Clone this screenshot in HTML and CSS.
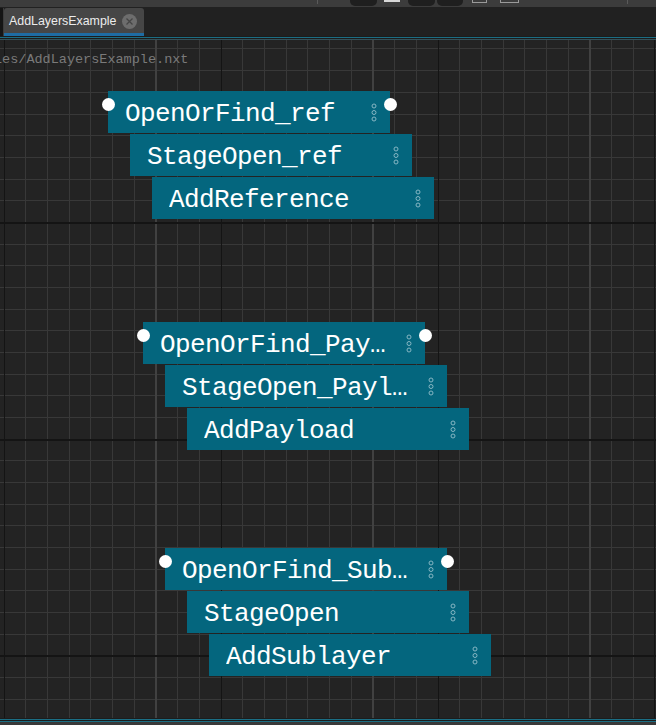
FILE: index.html
```html
<!DOCTYPE html>
<html>
<head>
<meta charset="utf-8">
<link rel="stylesheet" href="styles.css">
</head>
<body>
<div class="app">
  <div class="topstrip">
    <span class="tick t1"></span>
    <span class="tb tb1"></span>
    <span class="wbar"></span>
    <span class="tb tb2"></span>
    <span class="tb tb3"></span>
    <span class="brk b1"></span>
    <span class="brk b2"></span>
    <span class="tick t2"></span>
  </div>
  <div class="tabbar">
    <span class="tabedge"></span>
    <div class="tab">
      <span class="tabtitle">AddLayersExample</span>
      <svg class="tabclose" width="15" height="15" viewBox="0 0 15 15"><circle cx="7.5" cy="7.5" r="7.5" fill="#6d6d6d"/><path d="M4.5 4.5L10.5 10.5M10.5 4.5L4.5 10.5" stroke="#454545" stroke-width="1.3"/></svg>
    </div>
  </div>
  <div class="rule r-dark"></div>
  <div class="rule r-teal"></div>
  <div class="rule r-dark"></div>
  <div class="rule r-gray"></div>
  <div class="canvas">
    <svg class="grid" width="656" height="678" viewBox="0 40 656 678" shape-rendering="crispEdges">
      <g class="minor">
        <rect x="25" y="40" width="1" height="678"/><rect x="47" y="40" width="1" height="678"/><rect x="69" y="40" width="1" height="678"/><rect x="90" y="40" width="1" height="678"/><rect x="112" y="40" width="1" height="678"/><rect x="134" y="40" width="1" height="678"/><rect x="177" y="40" width="1" height="678"/><rect x="199" y="40" width="1" height="678"/><rect x="242" y="40" width="1" height="678"/><rect x="264" y="40" width="1" height="678"/><rect x="286" y="40" width="1" height="678"/><rect x="307" y="40" width="1" height="678"/><rect x="329" y="40" width="1" height="678"/><rect x="351" y="40" width="1" height="678"/><rect x="394" y="40" width="1" height="678"/><rect x="416" y="40" width="1" height="678"/><rect x="459" y="40" width="1" height="678"/><rect x="481" y="40" width="1" height="678"/><rect x="503" y="40" width="1" height="678"/><rect x="524" y="40" width="1" height="678"/><rect x="546" y="40" width="1" height="678"/><rect x="568" y="40" width="1" height="678"/><rect x="611" y="40" width="1" height="678"/><rect x="633" y="40" width="1" height="678"/>
        <rect x="0" y="48" width="656" height="1"/><rect x="0" y="70" width="656" height="1"/><rect x="0" y="92" width="656" height="1"/><rect x="0" y="114" width="656" height="1"/><rect x="0" y="135" width="656" height="1"/><rect x="0" y="157" width="656" height="1"/><rect x="0" y="179" width="656" height="1"/><rect x="0" y="200" width="656" height="1"/><rect x="0" y="244" width="656" height="1"/><rect x="0" y="265" width="656" height="1"/><rect x="0" y="287" width="656" height="1"/><rect x="0" y="309" width="656" height="1"/><rect x="0" y="330" width="656" height="1"/><rect x="0" y="352" width="656" height="1"/><rect x="0" y="374" width="656" height="1"/><rect x="0" y="395" width="656" height="1"/><rect x="0" y="417" width="656" height="1"/><rect x="0" y="460" width="656" height="1"/><rect x="0" y="482" width="656" height="1"/><rect x="0" y="504" width="656" height="1"/><rect x="0" y="525" width="656" height="1"/><rect x="0" y="547" width="656" height="1"/><rect x="0" y="569" width="656" height="1"/><rect x="0" y="590" width="656" height="1"/><rect x="0" y="612" width="656" height="1"/><rect x="0" y="634" width="656" height="1"/><rect x="0" y="677" width="656" height="1"/><rect x="0" y="699" width="656" height="1"/>
      </g>
      <g class="bright">
        <rect x="155" y="40" width="2" height="678"/><rect x="372" y="40" width="2" height="678"/><rect x="589" y="40" width="2" height="678"/>
      </g>
      <g class="dark">
        <rect x="4" y="40" width="1" height="678"/><rect x="221" y="40" width="1" height="678"/><rect x="438" y="40" width="1" height="678"/><rect x="654" y="40" width="1" height="678"/>
        <rect x="0" y="222" width="656" height="2"/><rect x="0" y="439" width="656" height="2"/><rect x="0" y="655" width="656" height="2"/>
      </g>
    </svg>

    <div class="pathlabel">les/AddLayersExample.nxt</div>

    <div class="group g1">
      <div class="node">
        <span class="port pl"></span>
        <span class="label">OpenOrFind_ref</span>
        <svg class="dots" width="8" height="19" viewBox="0 0 8 19"><circle cx="4" cy="3" r="2"/><circle cx="4" cy="9.5" r="2"/><circle cx="4" cy="16" r="2"/></svg>
        <span class="port pr"></span>
      </div>
      <div class="node">
        <span class="label">StageOpen_ref</span>
        <svg class="dots" width="8" height="19" viewBox="0 0 8 19"><circle cx="4" cy="3" r="2"/><circle cx="4" cy="9.5" r="2"/><circle cx="4" cy="16" r="2"/></svg>
      </div>
      <div class="node">
        <span class="label">AddReference</span>
        <svg class="dots" width="8" height="19" viewBox="0 0 8 19"><circle cx="4" cy="3" r="2"/><circle cx="4" cy="9.5" r="2"/><circle cx="4" cy="16" r="2"/></svg>
      </div>
    </div>

    <div class="group g2">
      <div class="node">
        <span class="port pl"></span>
        <span class="label">OpenOrFind_Payload</span>
        <svg class="dots" width="8" height="19" viewBox="0 0 8 19"><circle cx="4" cy="3" r="2"/><circle cx="4" cy="9.5" r="2"/><circle cx="4" cy="16" r="2"/></svg>
        <span class="port pr"></span>
      </div>
      <div class="node">
        <span class="label">StageOpen_Payload</span>
        <svg class="dots" width="8" height="19" viewBox="0 0 8 19"><circle cx="4" cy="3" r="2"/><circle cx="4" cy="9.5" r="2"/><circle cx="4" cy="16" r="2"/></svg>
      </div>
      <div class="node">
        <span class="label">AddPayload</span>
        <svg class="dots" width="8" height="19" viewBox="0 0 8 19"><circle cx="4" cy="3" r="2"/><circle cx="4" cy="9.5" r="2"/><circle cx="4" cy="16" r="2"/></svg>
      </div>
    </div>

    <div class="group g3">
      <div class="node">
        <span class="port pl"></span>
        <span class="label">OpenOrFind_Sublayer</span>
        <svg class="dots" width="8" height="19" viewBox="0 0 8 19"><circle cx="4" cy="3" r="2"/><circle cx="4" cy="9.5" r="2"/><circle cx="4" cy="16" r="2"/></svg>
        <span class="port pr"></span>
      </div>
      <div class="node">
        <span class="label">StageOpen</span>
        <svg class="dots" width="8" height="19" viewBox="0 0 8 19"><circle cx="4" cy="3" r="2"/><circle cx="4" cy="9.5" r="2"/><circle cx="4" cy="16" r="2"/></svg>
      </div>
      <div class="node">
        <span class="label">AddSublayer</span>
        <svg class="dots" width="8" height="19" viewBox="0 0 8 19"><circle cx="4" cy="3" r="2"/><circle cx="4" cy="9.5" r="2"/><circle cx="4" cy="16" r="2"/></svg>
      </div>
    </div>
  </div>
  <div class="rule r-dark"></div>
  <div class="rule r-teal"></div>
  <div class="rule r-dark"></div>
  <div class="rule r-teal"></div>
  <div class="bottomstrip"></div>
</div>
</body>
</html>
```
FILE: styles.css
```css
html, body {
  margin: 0;
  padding: 0;
  background: #222222;
}
.app {
  width: 656px;
  height: 725px;
  overflow: hidden;
  display: flex;
  flex-direction: column;
}
.topstrip {
  height: 7px;
  flex: none;
  background: #3c3c3c;
  display: flex;
  align-items: flex-start;
}
.tick {
  width: 1px;
  height: 4px;
  background: #5a5a5a;
}
.t1 { margin-left: 317px; }
.t2 { margin-left: 108px; }
.tb {
  height: 6px;
  background: #1f1f1f;
  border-radius: 0 0 5px 5px;
}
.tb1 { width: 27px; margin-left: 32px; }
.wbar { width: 16px; height: 2px; background: #d8d8d8; margin-left: 7px; }
.tb2 { width: 27px; margin-left: 8px; }
.tb3 { width: 26px; margin-left: 2px; }
.brk {
  height: 2px;
  border: 1px solid #9a9a9a;
  border-top: none;
}
.b1 { width: 13px; margin-left: 9px; }
.b2 { width: 17px; margin-left: 13px; }
.tabbar {
  height: 29px;
  flex: none;
  background: #212121;
  display: flex;
  align-items: flex-start;
}
.tabedge {
  width: 3px;
  height: 28px;
  margin-top: 1px;
  background: #151515;
  border-right: 1px solid #3c3c3c;
}
.tab {
  margin-top: 1px;
  width: 140px;
  height: 28px;
  box-sizing: border-box;
  background: #464646;
  border-radius: 3px 3px 0 0;
  border-bottom: 3px solid #1f6ca3;
  display: flex;
  align-items: center;
  justify-content: space-between;
  padding: 0 7px 0 5px;
}
.tabtitle {
  font-family: "Liberation Sans", Arial, sans-serif;
  font-size: 12.4px;
  color: #ececec;
  margin-top: 1px;
}
.tabclose { display: block; margin-top: 2px; }
.rule { height: 1px; flex: none; }
.r-dark { background: #1c1c1c; }
.r-teal { background: #1b6e84; }
.r-gray { background: #34525b; }
.canvas {
  position: relative;
  height: 678px;
  flex: none;
  background: #232323;
  overflow: hidden;
}
.grid {
  position: absolute;
  left: 0;
  top: 0;
  display: block;
}
.grid .minor { fill: #383838; }
.grid .bright { fill: #414141; }
.grid .dark { fill: #141414; }
.pathlabel {
  position: relative;
  margin: 11px 0 0 -6px;
  font-family: "Liberation Mono", "DejaVu Sans Mono", monospace;
  font-size: 13.5px;
  line-height: 17px;
  color: #7a7a7a;
  white-space: nowrap;
}
.group {
  position: absolute;
  display: flex;
  flex-direction: column;
  gap: 1px;
}
.g1 { left: 108px; top: 51px; }
.g2 { left: 143px; top: 282px; }
.g3 { left: 165px; top: 508px; }
.node {
  position: relative;
  width: 282px;
  height: 42px;
  box-sizing: border-box;
  background: #04667e;
  display: flex;
  align-items: center;
  padding: 0 12px 0 17px;
}
.node:nth-child(2) { margin-left: 22px; }
.node:nth-child(3) { margin-left: 44px; }
.label {
  width: 232px;
  flex: none;
  position: relative;
  top: 2px;
  font-family: "Liberation Mono", "DejaVu Sans Mono", monospace;
  font-size: 26px;
  letter-spacing: -0.6px;
  color: #ffffff;
  white-space: nowrap;
  overflow: hidden;
  text-overflow: ellipsis;
}
.dots {
  display: block;
  margin-left: auto;
  fill: none;
  stroke: #86b6c3;
  stroke-width: 1;
}
.port {
  position: absolute;
  top: 7px;
  width: 13px;
  height: 13px;
  border-radius: 50%;
  background: #ffffff;
}
.pl { left: -6.5px; }
.pr { right: -6.5px; }
.bottomstrip {
  flex: 1;
  background: #393939;
}
```
